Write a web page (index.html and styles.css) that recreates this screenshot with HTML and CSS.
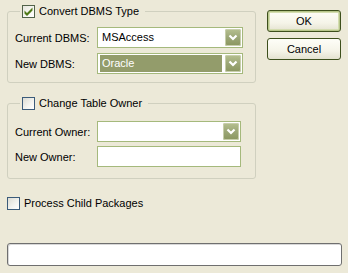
FILE: index.html
```html
<!DOCTYPE html>
<html>
<head>
<meta charset="utf-8">
<link rel="stylesheet" href="styles.css">
</head>
<body>
<div class="dialog">
  <div class="top">
    <div class="left">
      <fieldset class="group group-dbms">
        <legend class="legend">
          <span class="checkbox checked"><svg viewBox="0 0 11 11" width="11" height="11"><path d="M1.5 4.5 L4 7 L9.5 1.5 L9.5 4.5 L4 10 L1.5 7.5 Z" fill="#4f7a17"/></svg></span>
          <span class="legend-text">Convert DBMS Type</span>
        </legend>
        <div class="row">
          <span class="label">Current DBMS:</span>
          <div class="combo wide">
            <span class="value">MSAccess</span>
            <span class="drop"><svg viewBox="0 0 16 17" width="16" height="17"><polyline points="4.5,6.5 8,10 11.5,6.5" fill="none" stroke="#fff" stroke-width="2.2"/></svg></span>
          </div>
        </div>
        <div class="row">
          <span class="label">New DBMS:</span>
          <div class="combo wide">
            <span class="value selected">Oracle</span>
            <span class="drop"><svg viewBox="0 0 16 17" width="16" height="17"><polyline points="4.5,6.5 8,10 11.5,6.5" fill="none" stroke="#fff" stroke-width="2.2"/></svg></span>
          </div>
        </div>
      </fieldset>
      <fieldset class="group group-owner">
        <legend class="legend">
          <span class="checkbox"></span>
          <span class="legend-text">Change Table Owner</span>
        </legend>
        <div class="row row-owner">
          <span class="label">Current Owner:</span>
          <div class="combo narrow">
            <span class="value"></span>
            <span class="drop"><svg viewBox="0 0 16 17" width="16" height="17"><polyline points="4.5,6.5 8,10 11.5,6.5" fill="none" stroke="#fff" stroke-width="2.2"/></svg></span>
          </div>
        </div>
        <div class="row">
          <span class="label">New Owner:</span>
          <div class="textbox narrow"></div>
        </div>
      </fieldset>
    </div>
    <div class="right">
      <button class="btn default">OK</button>
      <button class="btn">Cancel</button>
    </div>
  </div>
  <label class="process">
    <span class="checkbox"></span>
    <span class="process-text">Process Child Packages</span>
  </label>
  <div class="status"></div>
</div>
</body>
</html>
```
FILE: styles.css
```css
html, body {
  margin: 0;
  padding: 0;
  background: #ece9d8;
}
body {
  font-family: "Liberation Sans", Arial, sans-serif;
  font-size: 11px;
  color: #000;
  width: 348px;
  height: 273px;
  overflow: hidden;
}
.dialog {
  padding: 5px 6px 0 7px;
}
.top {
  display: flex;
  gap: 11px;
}
.left {
  width: 249px;
}
.right {
  display: flex;
  flex-direction: column;
  gap: 6px;
  padding-top: 5px;
}
.group {
  margin: 0;
  border: 1px solid #d0d0bf;
  border-radius: 3px;
  min-width: 0;
  padding: 9px 0 8px 7px;
}
.group-owner {
  margin-top: 14px;
  padding: 11px 0 11px 7px;
}
.legend {
  display: flex;
  align-items: center;
  height: 13px;
  padding: 0 6px 0 2px;
  margin-left: 5px;
}
.legend-text {
  margin-left: 4px;
  line-height: 13px;
}
.checkbox {
  width: 13px;
  height: 13px;
  box-sizing: border-box;
  border: 1px solid #3b5b7a;
  background: linear-gradient(135deg, #dcdcd4 0%, #f4f4f0 60%, #ffffff 100%);
  display: flex;
  align-items: center;
  justify-content: center;
  flex: none;
}
.checkbox.checked {
  border-color: #51624a;
  background: linear-gradient(135deg, #e6e6de 0%, #f8f8f4 60%, #ffffff 100%);
}
.row {
  display: flex;
  align-items: center;
  height: 21px;
}
.row + .row {
  margin-top: 5px;
}
.group-owner .row + .row {
  margin-top: 4px;
}
.label {
  width: 82px;
  flex: none;
}
.combo {
  height: 21px;
  box-sizing: border-box;
  border: 1px solid #a5b97c;
  background: #fff;
  display: flex;
  align-items: stretch;
  padding: 1px;
}
.wide {
  width: 146px;
}
.narrow {
  width: 144px;
}
.value {
  flex: 1;
  padding-left: 3px;
  line-height: 17px;
  margin-right: 2px;
}
.value.selected {
  background: #939c6b;
  color: #fff;
  margin-left: 1px;
  padding-left: 2px;
  margin-right: 3px;
}
.drop {
  width: 16px;
  height: 17px;
  flex: none;
  border-radius: 2px;
  background: linear-gradient(180deg, #b6c090 0%, #9ca777 50%, #8a965f 100%);
  box-shadow: inset 0 0 0 1px #c7ceab;
  display: block;
}
.drop svg {
  display: block;
}
.textbox {
  height: 21px;
  box-sizing: border-box;
  border: 1px solid #a5b97c;
  background: #fff;
}
.btn {
  width: 74px;
  height: 22px;
  box-sizing: border-box;
  margin: 0;
  padding: 0;
  font-family: "Liberation Sans", Arial, sans-serif;
  font-size: 11px;
  color: #000;
  border: 1px solid #3d4f1c;
  border-radius: 3px;
  background: linear-gradient(180deg, #fefef8 0%, #f5f4e8 60%, #e4e2d0 100%);
}
.btn.default {
  box-shadow: inset 0 0 0 1px #b7c68a, inset 0 0 0 2px #d4ddb0;
}
.process {
  display: flex;
  align-items: center;
  height: 13px;
  margin-top: 18px;
}
.process-text {
  margin-left: 4px;
  line-height: 13px;
}
.status {
  margin-top: 33px;
  width: 335px;
  height: 23px;
  box-sizing: border-box;
  border: 1px solid #6f6f6f;
  border-radius: 3px;
  background: #fff;
  box-shadow: inset 1px 1px 0 #d8d8d8;
}
```
